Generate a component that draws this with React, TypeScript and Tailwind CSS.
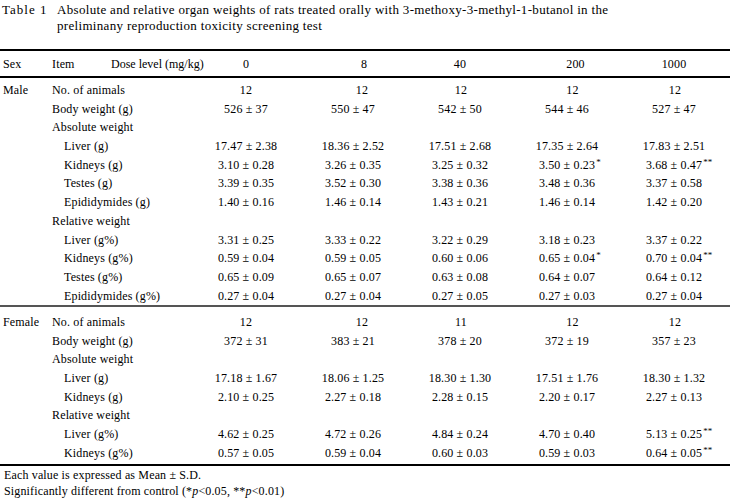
import React from "react";

type Row = {
  label: string;
  indent?: boolean;
  heading?: boolean;
  count?: boolean;
  values?: string[];
};

const male: Row[] = [
  { label: "No. of animals", count: true, values: ["12", "12", "12", "12", "12"] },
  { label: "Body weight (g)", values: ["526 ± 37", "550 ± 47", "542 ± 50", "544 ± 46", "527 ± 47"] },
  { label: "Absolute weight", heading: true },
  { label: "Liver (g)", indent: true, values: ["17.47 ± 2.38", "18.36 ± 2.52", "17.51 ± 2.68", "17.35 ± 2.64", "17.83 ± 2.51"] },
  { label: "Kidneys (g)", indent: true, values: ["3.10 ± 0.28", "3.26 ± 0.35", "3.25 ± 0.32", "3.50 ± 0.23*", "3.68 ± 0.47**"] },
  { label: "Testes (g)", indent: true, values: ["3.39 ± 0.35", "3.52 ± 0.30", "3.38 ± 0.36", "3.48 ± 0.36", "3.37 ± 0.58"] },
  { label: "Epididymides (g)", indent: true, values: ["1.40 ± 0.16", "1.46 ± 0.14", "1.43 ± 0.21", "1.46 ± 0.14", "1.42 ± 0.20"] },
  { label: "Relative weight", heading: true },
  { label: "Liver (g%)", indent: true, values: ["3.31 ± 0.25", "3.33 ± 0.22", "3.22 ± 0.29", "3.18 ± 0.23", "3.37 ± 0.22"] },
  { label: "Kidneys (g%)", indent: true, values: ["0.59 ± 0.04", "0.59 ± 0.05", "0.60 ± 0.06", "0.65 ± 0.04*", "0.70 ± 0.04**"] },
  { label: "Testes (g%)", indent: true, values: ["0.65 ± 0.09", "0.65 ± 0.07", "0.63 ± 0.08", "0.64 ± 0.07", "0.64 ± 0.12"] },
  { label: "Epididymides (g%)", indent: true, values: ["0.27 ± 0.04", "0.27 ± 0.04", "0.27 ± 0.05", "0.27 ± 0.03", "0.27 ± 0.04"] },
];

const female: Row[] = [
  { label: "No. of animals", count: true, values: ["12", "12", "11", "12", "12"] },
  { label: "Body weight (g)", values: ["372 ± 31", "383 ± 21", "378 ± 20", "372 ± 19", "357 ± 23"] },
  { label: "Absolute weight", heading: true },
  { label: "Liver (g)", indent: true, values: ["17.18 ± 1.67", "18.06 ± 1.25", "18.30 ± 1.30", "17.51 ± 1.76", "18.30 ± 1.32"] },
  { label: "Kidneys (g)", indent: true, values: ["2.10 ± 0.25", "2.27 ± 0.18", "2.28 ± 0.15", "2.20 ± 0.17", "2.27 ± 0.13"] },
  { label: "Relative weight", heading: true },
  { label: "Liver (g%)", indent: true, values: ["4.62 ± 0.25", "4.72 ± 0.26", "4.84 ± 0.24", "4.70 ± 0.40", "5.13 ± 0.25**"] },
  { label: "Kidneys (g%)", indent: true, values: ["0.57 ± 0.05", "0.59 ± 0.04", "0.60 ± 0.03", "0.59 ± 0.03", "0.64 ± 0.05**"] },
];

const countPad = ["pl-0", "pl-[18px]", "pl-[2px]", "pl-[11px]", "pl-[2px]"];

function Value({ v }: { v: string }) {
  const m = v.match(/^(.*?)(\*+)$/);
  if (!m) return <span>{v}</span>;
  return (
    <span className="relative">
      {m[1]}
      <span className="absolute left-full top-[-3px] pl-[1px] text-[9px]">{m[2]}</span>
    </span>
  );
}

function Block({ sex, rows }: { sex: string; rows: Row[] }) {
  return (
    <div className="flex flex-col">
      {rows.map((r, i) => (
        <div key={i} className="flex h-[18.7px] items-center whitespace-nowrap">
          <div className="w-[52px] pl-[3px]">{i === 0 ? sex : ""}</div>
          <div className={`w-[140.5px] ${r.indent ? "pl-[12px]" : ""}`}>{r.label}</div>
          {r.values &&
            r.values.map((v, j) => (
              <div
                key={j}
                className={`flex w-[107px] justify-center ${r.count ? countPad[j] : ""}`}
              >
                <Value v={v} />
              </div>
            ))}
        </div>
      ))}
    </div>
  );
}

export default function App() {
  return (
    <div className="relative h-[498px] w-[732px] overflow-hidden bg-white text-black font-['Liberation_Serif',serif] text-[12px] leading-[16px] tracking-[0.15px]">
      <div className="flex pl-[2px] pt-[2px] text-[13px] leading-[16px] tracking-[0.32px] whitespace-nowrap">
        <div className="w-[55px] shrink-0 tracking-[1px]">Table 1</div>
        <div>
          <div>Absolute and relative organ weights of rats treated orally with 3-methoxy-3-methyl-1-butanol in the</div>
          <div>preliminany reproduction toxicity screening test</div>
        </div>
      </div>

      <div className="mt-[15px] h-[2px] w-[730px] bg-black" />
      <div className="flex h-[25px] items-center whitespace-nowrap">
        <div className="w-[52px] pl-[3px]">Sex</div>
        <div className="w-[59px]">Item</div>
        <div className="w-[81.5px] tracking-normal">Dose level (mg/kg)</div>
        <div className="flex w-[107px] justify-center">0</div>
        <div className="flex w-[107px] justify-center pl-[22px]">8</div>
        <div className="flex w-[107px] justify-center">40</div>
        <div className="flex w-[107px] justify-center pl-[17px]">200</div>
        <div className="flex w-[107px] justify-center">1000</div>
      </div>
      <div className="h-[2px] w-[730px] bg-black" />

      <div className="pt-[2.7px]">
        <Block sex="Male" rows={male} />
      </div>
      <div className="h-[2px] w-[730px] bg-[#555555]" />
      <div className="pt-[5.6px] pb-[1.7px]">
        <Block sex="Female" rows={female} />
      </div>
      <div className="h-[2px] w-[730px] bg-black" />

      <div className="pl-[4px] pt-[1px]">
        <div>Each value is expressed as Mean ± S.D.</div>
        <div>
          Significantly different from control (*<i>p</i>&lt;0.05, **<i>p</i>&lt;0.01)
        </div>
      </div>
    </div>
  );
}
